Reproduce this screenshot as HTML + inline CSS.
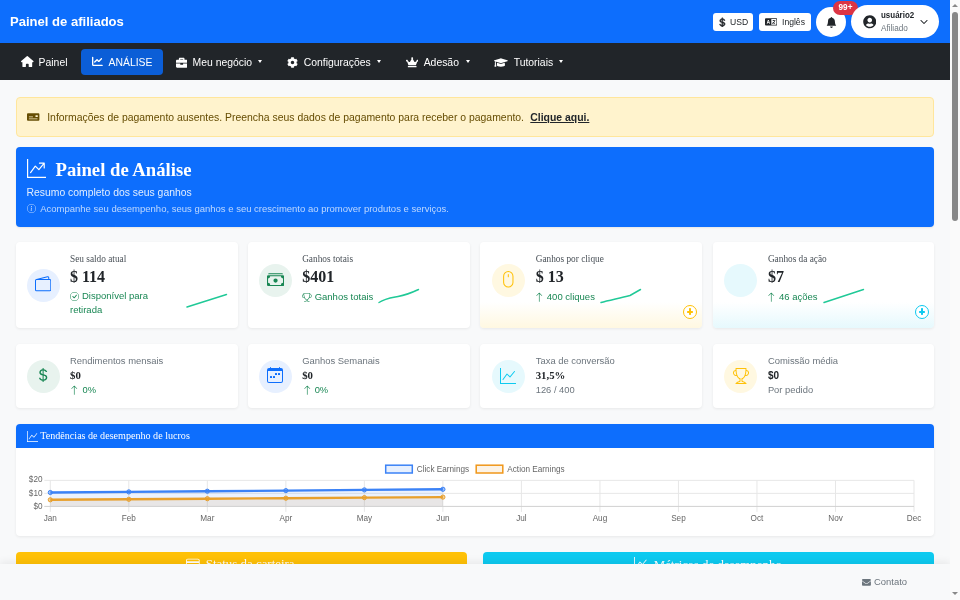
<!DOCTYPE html>
<html lang="pt"><head><meta charset="utf-8"><title>Painel de afiliados</title>
<style>
*{box-sizing:border-box;margin:0;padding:0}
html,body{width:960px;height:600px;overflow:hidden}
body{font-family:"Liberation Sans",sans-serif;background:#f8f9fa;color:#212529;position:relative;font-size:10.4px}
.abs{position:absolute}
.t{position:absolute;white-space:nowrap}
.serif{font-family:"Liberation Serif",serif}
#page{position:absolute;left:0;top:0;width:950px;height:600px;overflow:hidden;background:#f8f9fa;will-change:transform}
#top{position:absolute;left:0;top:0;width:950px;height:43px;background:#0d6efd}
#brand{left:10px;top:14.3px;font-size:13.05px;font-weight:bold;color:#fff;line-height:16px}
.pill{position:absolute;background:#fff;border-radius:3px;height:18px;top:13px}
.pill .t{font-size:8.6px;line-height:18px;top:0;color:#212529}
#bell{position:absolute;left:816px;top:7px;width:30px;height:30px;border-radius:50%;background:#fff}
#badge{position:absolute;left:833px;top:1px;width:25px;height:14px;border-radius:7px;background:#dc3545;color:#fff;font-size:8.2px;font-weight:bold;line-height:13px;text-align:center}
#user{position:absolute;left:851px;top:5px;width:88px;height:33px;border-radius:17px;background:#fff}
#nav{position:absolute;left:0;top:43px;width:950px;height:37px;background:#212529}
#nav .t{top:0.7px;height:37px;line-height:38px;color:#fff;font-size:10.4px}
#active{position:absolute;left:81px;top:6px;width:82px;height:26px;background:#0b5ed7;border-radius:4px}
.caret{position:absolute;top:17.2px;width:0;height:0;border-left:2.6px solid transparent;border-right:2.6px solid transparent;border-top:3.2px solid #fff}
#alert{position:absolute;left:16px;top:97px;width:918px;height:40px;background:#fff3cd;border:1px solid #ffe69c;border-radius:4px;color:#664d03}
#alert .t{font-size:10.43px;line-height:12px;top:13.5px}
#hero{position:absolute;left:16px;top:147px;width:918px;height:79.5px;background:#0d6efd;border-radius:4px;color:#fff;box-shadow:0 1px 2px rgba(0,0,0,.08)}
.card{position:absolute;background:#fff;border-radius:4px;box-shadow:0 1px 3px rgba(0,0,0,.07);overflow:hidden}
.c1{top:242px;width:221.5px;height:86px}
.c2{top:344px;width:221.5px;height:64px}
.ic{position:absolute;width:33px;height:33px;border-radius:50%}
.lbl1{font-family:"Liberation Serif",serif;font-size:9.3px;color:#495057;line-height:12px;left:54px;top:11px}
.val1{font-family:"Liberation Serif",serif;font-weight:bold;font-size:16px;color:#212529;line-height:19px;left:54px;top:25px}
.sub1{font-size:9.5px;color:#198754;line-height:14px;top:47px}
.lbl2{font-size:9.43px;color:#6c757d;line-height:12px;left:54px;top:11px}
.val2{font-family:"Liberation Serif",serif;font-weight:bold;font-size:10.8px;color:#212529;line-height:13px;left:54px;top:25px}
.sub2{font-size:9.35px;color:#198754;line-height:12px;top:40px}
#chart{position:absolute;left:16px;top:424px;width:918px;height:112px;background:#fff;border-radius:4px;box-shadow:0 1px 3px rgba(0,0,0,.07);overflow:hidden}
#charth{position:absolute;left:0;top:0;width:918px;height:24px;background:#0d6efd;color:#fff}
#by{position:absolute;left:16px;top:552px;width:451px;height:48px;background:#ffc107;border-radius:4px 4px 0 0;overflow:hidden}
#bc{position:absolute;left:483px;top:552px;width:451px;height:48px;background:#0dcaf0;border-radius:4px 4px 0 0;overflow:hidden}
#foot{position:absolute;left:0;top:564px;width:950px;height:36px;background:#f8f9fa;box-shadow:0 -2px 8px rgba(0,0,0,.07)}
#sb{position:absolute;left:950px;top:0;width:10px;height:600px;background:#fafafa}
#thumb{position:absolute;left:2px;top:12px;width:6px;height:209px;border-radius:3px;background:#888}
.arr{position:absolute;left:2px;width:0;height:0;border-left:3px solid transparent;border-right:3px solid transparent}
</style></head>
<body>
<div id="page">
<div id="top"><div class="t" id="brand">Painel de afiliados</div><div class="pill" style="left:713px;width:40px"><svg class="abs" style="left:3.8px;top:3.6px" width="10.4" height="10.8" viewBox="0 0 16 16" fill="#212529" stroke="#212529" stroke-width="0.9"><path d="M4 10.781c.148 1.667 1.513 2.850 3.591 3.003V15h1.043v-1.216c2.270-.179 3.678-1.438 3.678-3.300 0-1.590-.947-2.510-2.956-3.028l-.722-.187V3.467c1.122.110 1.879.714 2.070 1.616h1.470c-.166-1.600-1.540-2.748-3.540-2.875V1H7.591v1.233c-1.939.230-3.270 1.472-3.270 3.156 0 1.454.966 2.483 2.661 2.917l.61.162v4.031c-1.149-.170-1.940-.800-2.131-1.718H4zm3.391-3.836c-1.043-.263-1.600-.825-1.600-1.616 0-.944.704-1.641 1.800-1.828v3.495l-.200-.050zm1.591 1.872c1.287.323 1.852.859 1.852 1.769 0 1.097-.826 1.828-2.200 1.939V8.730l.348.086z"/></svg><div class="t" style="left:17px">USD</div></div><div class="pill" style="left:759px;width:52px"><svg class="abs" style="left:5.7px;top:3.75px" width="12.2" height="9.76" viewBox="0 0 640 512" fill="#212529" ><path fill-rule="evenodd" d="M48 64h544a48 48 0 0 1 48 48v288a48 48 0 0 1-48 48H48a48 48 0 0 1-48-48V112a48 48 0 0 1 48-48zm284 40v304h236a32 32 0 0 0 32-32V136a32 32 0 0 0-32-32H332zM152 160l-64 192h40l12-40h72l12 40h40l-64-192h-48zm24 48l24 72h-48l24-72z"/><path d="M400 176h40v-24h32v24h72v32h-20c-8 40-26 72-50 96 16 12 34 20 54 26l-12 30c-26-8-48-20-68-36-20 16-42 28-68 36l-12-30c22-6 40-14 56-26-12-14-22-30-28-48h34c4 10 10 18 18 26 16-18 28-42 34-74H400v-32z"/></svg><div class="t" style="left:23px">Inglês</div></div><div id="bell"><svg class="abs" style="left:9.8px;top:9.8px" width="10.9" height="10.9" viewBox="0 0 16 16" fill="#212529" ><path d="M8 16a2 2 0 0 0 2-2H6a2 2 0 0 0 2 2zm.995-14.901a1 1 0 1 0-1.990 0A5.002 5.002 0 0 0 3 6c0 1.098-.5 6-2 7h14c-1.500-1-2-5.902-2-7 0-2.420-1.720-4.440-4.005-4.901z"/></svg></div><div id="badge">99+</div><div id="user"><svg class="abs" style="left:11.5px;top:10px" width="13.5" height="13.5" viewBox="0 0 496 512" fill="#212529" ><path d="M248 8C111 8 0 119 0 256s111 248 248 248 248-111 248-248S385 8 248 8zm0 96c48.600 0 88 39.400 88 88s-39.400 88-88 88-88-39.400-88-88 39.400-88 88-88zm0 344c-58.700 0-111.300-26.600-146.500-68.200 18.800-35.400 55.600-59.800 98.500-59.800 2.400 0 4.800.4 7.100 1.100 13 4.200 26.600 6.900 40.900 6.900 14.300 0 28-2.700 40.900-6.900 2.300-.7 4.700-1.100 7.100-1.100 42.900 0 79.700 24.400 98.500 59.800C359.300 421.400 306.700 448 248 448z"/></svg><div class="t" style="left:30px;top:2.5px;font-size:9.5px;font-weight:bold;line-height:14px;color:#212529;transform:scaleX(.838);transform-origin:0 0">usuário2</div><div class="t" style="left:30px;top:16px;font-size:9.5px;line-height:14px;color:#6c757d;transform:scaleX(.86);transform-origin:0 0">Afiliado</div><svg class="abs" style="left:69px;top:13px" width="8" height="8" viewBox="0 0 16 16" fill="#212529" stroke="#212529" stroke-width="1"><path fill-rule="evenodd" d="M1.646 4.646a.5.5 0 0 1 .708 0L8 10.293l5.646-5.647a.5.5 0 0 1 .708.708l-6 6a.5.5 0 0 1-.708 0l-6-6a.5.5 0 0 1 0-.708z"/></svg></div></div>
<div id="nav"><div id="active"></div><svg class="abs" style="left:21px;top:13.1px" width="12.6" height="11.2" viewBox="0 0 576 512" fill="#fff" ><path d="M288 0 Q276 0 266 8 L10 232 Q0 242 0 256 Q0 288 32 288 H64 V472 Q64 512 104 512 H184 Q224 512 224 472 V384 Q224 352 256 352 H320 Q352 352 352 384 V472 Q352 512 392 512 H472 Q512 512 512 472 V288 H544 Q576 288 576 256 Q576 241 565 231 L310 8 Q300 0 288 0 Z"/></svg><div class="t" style="left:38.6px">Painel</div><svg class="abs" style="left:92px;top:13.4px" width="10.8" height="10.8" viewBox="0 0 512 512" fill="#fff" ><path d="M64 64c0-17.7-14.3-32-32-32S0 46.3 0 64V400c0 44.2 35.8 80 80 80H480c17.700 0 32-14.300 32-32s-14.300-32-32-32H80c-8.800 0-16-7.200-16-16V64zm406.600 86.600c12.500-12.500 12.500-32.800 0-45.300s-32.800-12.500-45.300 0L320 210.700l-57.400-57.400c-12.500-12.500-32.800-12.500-45.300 0l-112 112c-12.500 12.500-12.500 32.800 0 45.300s32.800 12.500 45.300 0L240 221.300l57.400 57.400c12.500 12.500 32.800 12.500 45.300 0l128-128z"/></svg><div class="t" style="left:108.6px">ANÁLISE</div><svg class="abs" style="left:176px;top:13.9px" width="11.4" height="11.4" viewBox="0 0 512 512" fill="#fff" ><path d="M320 336c0 8.84-7.16 16-16 16h-96c-8.84 0-16-7.16-16-16v-48H0v144c0 25.6 22.4 48 48 48h416c25.6 0 48-22.4 48-48V288H320v48zm144-208h-80V80c0-25.6-22.4-48-48-48H176c-25.6 0-48 22.4-48 48v48H48c-25.6 0-48 22.4-48 48v80h512v-80c0-25.6-22.4-48-48-48zm-144 0H192V96h128v32z"/></svg><div class="t" style="left:192.6px">Meu negócio</div><div class="caret" style="left:258px"></div><svg class="abs" style="left:287.3px;top:14px" width="11" height="11" viewBox="0 0 512 512" fill="#fff" ><path d="M487.4 315.7l-42.6-24.6c4.3-23.2 4.3-47 0-70.2l42.6-24.6c4.9-2.8 7.1-8.6 5.5-14-11.1-35.6-30-67.8-54.7-94.6-3.8-4.1-10-5.1-14.8-2.3L380.8 110c-17.9-15.4-38.5-27.3-60.8-35.1V25.800c0-5.600-3.900-10.500-9.400-11.700-36.700-8.200-74.300-7.800-109.200 0-5.500 1.200-9.400 6.100-9.400 11.700V75c-22.200 7.900-42.800 19.800-60.800 35.100L88.700 85.500c-4.900-2.800-11-1.900-14.800 2.300-24.700 26.700-43.600 58.900-54.700 94.600-1.700 5.400.6 11.200 5.500 14L67.300 221c-4.300 23.200-4.300 47 0 70.200l-42.600 24.600c-4.900 2.800-7.100 8.600-5.500 14 11.100 35.600 30 67.800 54.700 94.600 3.800 4.100 10 5.100 14.800 2.300l42.600-24.600c17.900 15.400 38.500 27.300 60.800 35.100v49.200c0 5.600 3.900 10.500 9.400 11.700 36.700 8.200 74.300 7.800 109.200 0 5.500-1.200 9.400-6.100 9.400-11.700v-49.200c22.200-7.900 42.800-19.800 60.800-35.100l42.600 24.600c4.900 2.800 11 1.900 14.800-2.300 24.700-26.700 43.600-58.900 54.700-94.600 1.500-5.500-.7-11.300-5.600-14.100zM256 336c-44.100 0-80-35.900-80-80s35.900-80 80-80 80 35.900 80 80-35.900 80-80 80z"/></svg><div class="t" style="left:303.7px">Configurações</div><div class="caret" style="left:377px"></div><svg class="abs" style="left:405.5px;top:14px" width="12.4" height="10.5" viewBox="0 0 640 512" fill="#fff" ><path d="M528 448H112c-8.8 0-16 7.2-16 16v32c0 8.8 7.2 16 16 16h416c8.8 0 16-7.2 16-16v-32c0-8.800-7.200-16-16-16zm64-320c-26.500 0-48 21.500-48 48 0 7.100 1.600 13.700 4.400 19.800L476 239.200c-15.400 9.200-35.300 4-44.200-11.600L350.300 85C361 76.200 368 63 368 48c0-26.500-21.500-48-48-48s-48 21.500-48 48c0 15 7 28.200 17.700 37l-81.500 142.600c-8.900 15.600-28.900 20.800-44.200 11.600l-72.300-43.400c2.700-6 4.400-12.700 4.400-19.800 0-26.500-21.500-48-48-48S0 149.500 0 176s21.500 48 48 48c2.600 0 5.200-.4 7.700-.8L128 416h384l72.300-192.800c2.500.4 5.100.8 7.700.8 26.500 0 48-21.500 48-48s-21.500-48-48-48z"/></svg><div class="t" style="left:423.7px">Adesão</div><div class="caret" style="left:466px"></div><svg class="abs" style="left:494px;top:14px" width="13.8" height="11" viewBox="0 0 640 512" fill="#fff" ><path d="M622.34 153.2L343.4 67.5c-15.2-4.670-31.600-4.670-46.790 0L17.660 153.2c-23.540 7.230-23.540 38.360 0 45.590l48.630 14.940c-10.670 13.190-17.230 29.280-17.880 46.900C38.780 266.150 32 276.110 32 288c0 10.780 5.680 19.850 13.860 25.650L20.330 428.530C18.110 438.520 25.710 448 35.940 448h56.110c10.240 0 17.840-9.480 15.620-19.470L82.140 313.650C90.320 307.850 96 298.780 96 288c0-11.570-6.470-21.250-15.660-26.870.76-15.020 8.440-28.300 20.690-36.720L296.600 284.500c9.060 2.780 26.440 6.250 46.790 0l278.950-85.700c23.550-7.240 23.550-38.360 0-45.600zM352.790 315.090c-28.530 8.760-52.840 3.920-65.590 0l-145.020-44.550L128 384c0 35.350 85.960 64 192 64s192-28.650 192-64l-14.180-113.470-145.030 44.560z"/></svg><div class="t" style="left:513.7px">Tutoriais</div><div class="caret" style="left:558.5px"></div></div>
<div id="alert"><svg class="abs" style="left:10.3px;top:14px" width="12.4" height="10" viewBox="0 0 640 512" fill="#664d03" ><path fill-rule="evenodd" d="M48 64h544a48 48 0 0 1 48 48v288a48 48 0 0 1-48 48H48a48 48 0 0 1-48-48V112a48 48 0 0 1 48-48zm390 120v56a14 14 0 0 0 14 14h92a14 14 0 0 0 14-14v-56a14 14 0 0 0-14-14h-92a14 14 0 0 0-14 14zM96 240v20a8 8 0 0 0 8 8h196a8 8 0 0 0 8-8v-20a8 8 0 0 0-8-8H104a8 8 0 0 0-8 8zm0 106v20a8 8 0 0 0 8 8h432a8 8 0 0 0 8-8v-20a8 8 0 0 0-8-8H104a8 8 0 0 0-8 8z"/></svg><div class="t" style="left:30.2px">Informações de pagamento ausentes. Preencha seus dados de pagamento para receber o pagamento.</div><div class="t" style="left:513.3px;font-weight:bold;color:#212529;text-decoration:underline">Clique aqui.</div></div>
<div id="hero"><svg class="abs" style="left:10.5px;top:12px" width="19" height="19" viewBox="0 0 16 16" fill="#fff" ><path fill-rule="evenodd" d="M0 0h1v15h15v1H0V0Zm10 3.500a.5.5 0 0 1 .5-.5h4a.5.5 0 0 1 .5.5v4a.5.5 0 0 1-1 0V4.900l-3.613 4.417a.5.5 0 0 1-.74.037L7.060 6.767l-3.656 5.027a.5.5 0 0 1-.808-.588l4-5.500a.5.5 0 0 1 .758-.06l2.609 2.610L13.445 4H10.500a.5.5 0 0 1-.5-.5Z"/></svg><div class="t serif" style="left:39.5px;top:10.5px;font-size:18.7px;font-weight:bold;line-height:24px">Painel de Análise</div><div class="t" style="left:10.5px;top:38.5px;font-size:10.4px;line-height:13px;color:rgba(255,255,255,.88)">Resumo completo dos seus ganhos</div><svg class="abs" style="left:10.5px;top:57px" width="9" height="9" viewBox="0 0 16 16" fill="rgba(255,255,255,.75)" ><path d="M8 15A7 7 0 1 1 8 1a7 7 0 0 1 0 14zm0 1A8 8 0 1 0 8 0a8 8 0 0 0 0 16z"/><path d="m8.930 6.588-2.290.287-.082.380.450.083c.294.070.352.176.288.469l-.738 3.468c-.194.897.105 1.319.808 1.319.545 0 1.178-.252 1.465-.598l.088-.416c-.200.176-.492.246-.686.246-.275 0-.375-.193-.304-.533L8.930 6.588zM9 4.500a1 1 0 1 1-2 0 1 1 0 0 1 2 0z"/></svg><div class="t" style="left:24.2px;top:55.5px;font-size:9.5px;line-height:12px;color:rgba(255,255,255,.72)">Acompanhe seu desempenho, seus ganhos e seu crescimento ao promover produtos e serviços.</div></div>
<div class="card c1" style="left:16px"><div class="ic" style="left:10.5px;top:26.5px;background:#e7f0ff"></div><svg class="abs" style="left:19.2px;top:34.1px" width="16.3" height="16.3" viewBox="0 0 16 16" fill="#0d6efd" ><path d="M12.136.326A1.500 1.500 0 0 1 14 1.780V3h.5A1.500 1.500 0 0 1 16 4.500v9a1.500 1.500 0 0 1-1.500 1.500h-13A1.500 1.500 0 0 1 0 13.500v-9a1.500 1.500 0 0 1 1.432-1.499L12.136.326zM5.562 3H13V1.780a.5.5 0 0 0-.621-.484L5.562 3zM1.500 4a.5.5 0 0 0-.5.5v9a.5.5 0 0 0 .5.5h13a.5.5 0 0 0 .5-.5v-9a.5.5 0 0 0-.5-.5h-13z"/></svg><div class="t lbl1">Seu saldo atual</div><div class="t val1">$ 114</div><svg class="abs" style="left:54px;top:50px" width="9" height="9" viewBox="0 0 16 16" fill="#198754" ><path d="M8 15A7 7 0 1 1 8 1a7 7 0 0 1 0 14zm0 1A8 8 0 1 0 8 0a8 8 0 0 0 0 16z"/><path d="M10.970 4.970a.235.235 0 0 0-.020.022L7.477 9.417 5.384 7.323a.75.75 0 0 0-1.060 1.060L6.970 11.030a.75.75 0 0 0 1.079-.020l3.992-4.990a.75.75 0 0 0-1.071-1.050z"/></svg><div class="t sub1" style="left:66px">Disponível para</div><div class="t sub1" style="left:54px;top:61px">retirada</div><svg class="abs" style="left:168px;top:50px" width="46" height="18" viewBox="0 0 46 18" fill="none" stroke="#20c997" stroke-width="1.45" stroke-linecap="round" stroke-linejoin="round"><path d="M3 15 L42.5 2.5"/></svg></div>
<div class="card c1" style="left:248.17px"><div class="ic" style="left:10.5px;top:21.5px;background:#e8f3ee"></div><svg class="abs" style="left:18.8px;top:28.9px" width="17.1" height="17.1" viewBox="0 0 16 16" fill="#198754" ><path d="M1 3a1 1 0 0 1 1-1h12a1 1 0 0 1 1 1H1zm7 8a2 2 0 1 0 0-4 2 2 0 0 0 0 4z"/><path d="M0 5a1 1 0 0 1 1-1h14a1 1 0 0 1 1 1v8a1 1 0 0 1-1 1H1a1 1 0 0 1-1-1V5zm3 0a2 2 0 0 1-2 2v4a2 2 0 0 1 2 2h10a2 2 0 0 1 2-2V7a2 2 0 0 1-2-2H3z"/></svg><div class="t lbl1">Ganhos totais</div><div class="t val1">$401</div><svg class="abs" style="left:54.2px;top:50.7px" width="9.7" height="9.7" viewBox="0 0 16 16" fill="#198754" ><path d="M2.500.5A.5.5 0 0 1 3 0h10a.5.5 0 0 1 .5.5c0 .538-.012 1.050-.034 1.536a3 3 0 1 1-1.133 5.890c-.790 1.865-1.878 2.777-2.833 3.011v2.173l1.425.356c.194.048.377.135.537.255L13.300 15.100a.5.5 0 0 1-.300.900H3a.5.5 0 0 1-.300-.900l1.838-1.379c.160-.120.343-.207.537-.255L6.500 13.110v-2.173c-.955-.234-2.043-1.146-2.833-3.012a3 3 0 1 1-1.132-5.890A33.076 33.076 0 0 1 2.500.5zm.099 2.540a2 2 0 0 0 .720 3.935c-.333-1.050-.588-2.346-.720-3.935zm10.083 3.935a2 2 0 0 0 .720-3.935c-.133 1.590-.388 2.885-.720 3.935zM3.504 1c.007.517.026 1.006.056 1.469.130 2.028.457 3.546.870 4.667C5.294 9.480 6.484 10 7 10a.5.5 0 0 1 .5.5v2.610a1 1 0 0 1-.757.970l-1.426.356a.5.5 0 0 0-.179.085L4.500 15h7l-.638-.479a.501.501 0 0 0-.180-.085l-1.425-.356a1 1 0 0 1-.757-.970V10.500A.5.5 0 0 1 9 10c.516 0 1.706-.520 2.570-2.864.413-1.120.740-2.640.870-4.667.030-.463.049-.952.056-1.469H3.504z"/></svg><div class="t sub1" style="left:66.5px;top:48px">Ganhos totais</div><svg class="abs" style="left:128px;top:45px" width="46" height="18" viewBox="0 0 46 18" fill="none" stroke="#20c997" stroke-width="1.45" stroke-linecap="round" stroke-linejoin="round"><path d="M3 15.5 C9 11.5 14 11 22 9.5 S 34 6.5 42.5 2.5"/></svg></div>
<div class="card c1" style="left:480.33px;background:linear-gradient(#fff 0,#fff 70%,#fff8e1 100%)"><div class="ic" style="left:11.5px;top:21.5px;background:#fff8e1"></div><svg class="abs" style="left:19.6px;top:29px" width="16.6" height="16.6" viewBox="0 0 16 16" fill="#ffc107" ><path d="M8 3a.5.5 0 0 1 .5.5v2a.5.5 0 0 1-1 0v-2A.5.5 0 0 1 8 3zm4 8a4 4 0 0 1-8 0V5a4 4 0 1 1 8 0v6zM8 0a5 5 0 0 0-5 5v6a5 5 0 0 0 10 0V5a5 5 0 0 0-5-5z"/></svg><div class="t lbl1" style="left:55.4px">Ganhos por clique</div><div class="t val1" style="left:55.4px">$ 13</div><svg class="abs" style="left:53.9px;top:50.05px" width="10.5" height="10.5" viewBox="0 0 16 16" fill="#198754" ><path fill-rule="evenodd" d="M8 15a.5.5 0 0 0 .5-.5V2.707l3.146 3.147a.5.5 0 0 0 .708-.708l-4-4a.5.5 0 0 0-.708 0l-4 4a.5.5 0 1 0 .708.708L7.500 2.707V14.500a.5.5 0 0 0 .5.5z"/></svg><div class="t sub1" style="left:66.5px;top:48px">400 cliques</div><svg class="abs" style="left:118px;top:45px" width="46" height="18" viewBox="0 0 46 18" fill="none" stroke="#20c997" stroke-width="1.45" stroke-linecap="round" stroke-linejoin="round"><path d="M3 15.5 C10 13.5 20 11.5 32 8.5 L42.5 2.5"/></svg><div class="abs" style="left:202.6px;top:62.9px;width:14.2px;height:14.2px;border-radius:50%;border:1.1px solid #ffc107;background:#fff"><div class="abs" style="left:2.6px;top:5.28px;width:6.8px;height:1.45px;border-radius:.7px;background:#ffc107"></div><div class="abs" style="left:5.28px;top:2.6px;width:1.45px;height:6.8px;border-radius:.7px;background:#ffc107"></div></div></div>
<div class="card c1" style="left:712.5px;background:linear-gradient(#fff 0,#fff 70%,#e6f9fd 100%)"><div class="ic" style="left:11.5px;top:21.5px;background:#e6f9fd"></div><div class="t lbl1" style="left:55.4px">Ganhos da ação</div><div class="t val1" style="left:55.4px">$7</div><svg class="abs" style="left:53.9px;top:50.05px" width="10.5" height="10.5" viewBox="0 0 16 16" fill="#198754" ><path fill-rule="evenodd" d="M8 15a.5.5 0 0 0 .5-.5V2.707l3.146 3.147a.5.5 0 0 0 .708-.708l-4-4a.5.5 0 0 0-.708 0l-4 4a.5.5 0 1 0 .708.708L7.500 2.707V14.500a.5.5 0 0 0 .5.5z"/></svg><div class="t sub1" style="left:66.5px;top:48px">46 ações</div><svg class="abs" style="left:108.5px;top:45px" width="46" height="18" viewBox="0 0 46 18" fill="none" stroke="#20c997" stroke-width="1.45" stroke-linecap="round" stroke-linejoin="round"><path d="M3 15.5 L42.5 2.5"/></svg><div class="abs" style="left:202.6px;top:62.9px;width:14.2px;height:14.2px;border-radius:50%;border:1.1px solid #0dcaf0;background:#fff"><div class="abs" style="left:2.6px;top:5.28px;width:6.8px;height:1.45px;border-radius:.7px;background:#0dcaf0"></div><div class="abs" style="left:5.28px;top:2.6px;width:1.45px;height:6.8px;border-radius:.7px;background:#0dcaf0"></div></div></div>
<div class="card c2" style="left:16px"><div class="ic" style="left:10.5px;top:15.5px;background:#e8f3ee"></div><svg class="abs" style="left:19.4px;top:23.1px" width="16" height="16" viewBox="0 0 16 16" fill="#198754" ><path d="M4 10.781c.148 1.667 1.513 2.850 3.591 3.003V15h1.043v-1.216c2.270-.179 3.678-1.438 3.678-3.300 0-1.590-.947-2.510-2.956-3.028l-.722-.187V3.467c1.122.110 1.879.714 2.070 1.616h1.470c-.166-1.600-1.540-2.748-3.540-2.875V1H7.591v1.233c-1.939.230-3.270 1.472-3.270 3.156 0 1.454.966 2.483 2.661 2.917l.61.162v4.031c-1.149-.170-1.940-.800-2.131-1.718H4zm3.391-3.836c-1.043-.263-1.600-.825-1.600-1.616 0-.944.704-1.641 1.800-1.828v3.495l-.200-.050zm1.591 1.872c1.287.323 1.852.859 1.852 1.769 0 1.097-.826 1.828-2.200 1.939V8.730l.348.086z"/></svg><div class="t lbl2">Rendimentos mensais</div><div class="t val2">$0</div><svg class="abs" style="left:53.45px;top:40.75px" width="10.5" height="10.5" viewBox="0 0 16 16" fill="#198754" ><path fill-rule="evenodd" d="M8 15a.5.5 0 0 0 .5-.5V2.707l3.146 3.147a.5.5 0 0 0 .708-.708l-4-4a.5.5 0 0 0-.708 0l-4 4a.5.5 0 1 0 .708.708L7.500 2.707V14.500a.5.5 0 0 0 .5.5z"/></svg><div class="t sub2" style="left:66.5px">0%</div></div>
<div class="card c2" style="left:248.17px"><div class="ic" style="left:10.5px;top:15.5px;background:#e7f0ff"></div><svg class="abs" style="left:18.6px;top:23px" width="16" height="16" viewBox="0 0 16 16" fill="#0d6efd" ><path d="M11 6.500a.5.5 0 0 1 .5-.5h1a.5.5 0 0 1 .5.5v1a.5.5 0 0 1-.5.5h-1a.5.5 0 0 1-.5-.5v-1zm-3 0a.5.5 0 0 1 .5-.5h1a.5.5 0 0 1 .5.5v1a.5.5 0 0 1-.5.5h-1a.5.5 0 0 1-.5-.5v-1zm-5 3a.5.5 0 0 1 .5-.5h1a.5.5 0 0 1 .5.5v1a.5.5 0 0 1-.5.5h-1a.5.5 0 0 1-.5-.5v-1zm3 0a.5.5 0 0 1 .5-.5h1a.5.5 0 0 1 .5.5v1a.5.5 0 0 1-.5.5h-1a.5.5 0 0 1-.5-.5v-1z"/><path d="M3.500 0a.5.5 0 0 1 .5.5V1h8V.5a.5.5 0 0 1 1 0V1h1a2 2 0 0 1 2 2v11a2 2 0 0 1-2 2H2a2 2 0 0 1-2-2V3a2 2 0 0 1 2-2h1V.5a.5.5 0 0 1 .5-.5zM1 4v10a1 1 0 0 0 1 1h12a1 1 0 0 0 1-1V4H1z"/></svg><div class="t lbl2">Ganhos Semanais</div><div class="t val2">$0</div><svg class="abs" style="left:53.45px;top:40.75px" width="10.5" height="10.5" viewBox="0 0 16 16" fill="#198754" ><path fill-rule="evenodd" d="M8 15a.5.5 0 0 0 .5-.5V2.707l3.146 3.147a.5.5 0 0 0 .708-.708l-4-4a.5.5 0 0 0-.708 0l-4 4a.5.5 0 1 0 .708.708L7.500 2.707V14.500a.5.5 0 0 0 .5.5z"/></svg><div class="t sub2" style="left:66.5px">0%</div></div>
<div class="card c2" style="left:480.33px"><div class="ic" style="left:11.5px;top:15.5px;background:#e6f9fd"></div><svg class="abs" style="left:20px;top:24px" width="16" height="16" viewBox="0 0 16 16" fill="#0dcaf0" ><path fill-rule="evenodd" d="M0 0h1v15h15v1H0V0Zm14.817 3.113a.5.5 0 0 1 .07.704l-4.500 5.500a.5.5 0 0 1-.74.037L7.060 6.767l-3.656 5.027a.5.5 0 0 1-.808-.588l4-5.500a.5.5 0 0 1 .758-.06l2.609 2.610 4.150-5.073a.5.5 0 0 1 .704-.07Z"/></svg><div class="t lbl2" style="left:55.4px">Taxa de conversão</div><div class="t val2" style="left:55.4px">31,5%</div><div class="t sub2" style="left:55.4px;color:#6c757d">126 / 400</div></div>
<div class="card c2" style="left:712.5px"><div class="ic" style="left:11.5px;top:15.5px;background:#fff8e1"></div><svg class="abs" style="left:20px;top:24px" width="16" height="16" viewBox="0 0 16 16" fill="#ffc107" ><path d="M2.500.5A.5.5 0 0 1 3 0h10a.5.5 0 0 1 .5.5c0 .538-.012 1.050-.034 1.536a3 3 0 1 1-1.133 5.890c-.790 1.865-1.878 2.777-2.833 3.011v2.173l1.425.356c.194.048.377.135.537.255L13.300 15.100a.5.5 0 0 1-.300.900H3a.5.5 0 0 1-.300-.900l1.838-1.379c.160-.120.343-.207.537-.255L6.500 13.110v-2.173c-.955-.234-2.043-1.146-2.833-3.012a3 3 0 1 1-1.132-5.890A33.076 33.076 0 0 1 2.500.5zm.099 2.540a2 2 0 0 0 .720 3.935c-.333-1.050-.588-2.346-.720-3.935zm10.083 3.935a2 2 0 0 0 .720-3.935c-.133 1.590-.388 2.885-.720 3.935zM3.504 1c.007.517.026 1.006.056 1.469.130 2.028.457 3.546.870 4.667C5.294 9.480 6.484 10 7 10a.5.5 0 0 1 .5.5v2.610a1 1 0 0 1-.757.970l-1.426.356a.5.5 0 0 0-.179.085L4.500 15h7l-.638-.479a.501.501 0 0 0-.180-.085l-1.425-.356a1 1 0 0 1-.757-.970V10.500A.5.5 0 0 1 9 10c.516 0 1.706-.520 2.570-2.864.413-1.120.740-2.640.870-4.667.030-.463.049-.952.056-1.469H3.504z"/></svg><div class="t lbl2" style="left:55.4px">Comissão média</div><div class="t val2" style="left:55.4px;font-family:'Liberation Sans',sans-serif;font-size:10px">$0</div><div class="t sub2" style="left:55.4px;color:#6c757d">Por pedido</div></div>
<div id="chart"><div id="charth"><svg class="abs" style="left:10.5px;top:6.5px" width="11" height="11" viewBox="0 0 16 16" fill="#fff" ><path fill-rule="evenodd" d="M0 0h1v15h15v1H0V0Zm14.817 3.113a.5.5 0 0 1 .07.704l-4.500 5.500a.5.5 0 0 1-.74.037L7.060 6.767l-3.656 5.027a.5.5 0 0 1-.808-.588l4-5.500a.5.5 0 0 1 .758-.06l2.609 2.610 4.150-5.073a.5.5 0 0 1 .704-.07Z"/></svg><div class="t serif" style="left:24.3px;top:0;font-size:10.1px;line-height:24px">Tendências de desempenho de lucros</div></div><svg class="abs" style="left:0;top:24px" width="918" height="88" viewBox="0 24 918 88" font-family="Liberation Sans, sans-serif"><line x1="28.299999999999997" x2="898.0199999999999" y1="56.35" y2="56.35" stroke="#e7e7e7" stroke-width="1"/><line x1="28.299999999999997" x2="898.0199999999999" y1="69.38" y2="69.38" stroke="#e7e7e7" stroke-width="1"/><line x1="34.30" x2="34.30" y1="56.35" y2="87.90" stroke="#e7e7e7" stroke-width="1"/><line x1="112.82" x2="112.82" y1="56.35" y2="87.90" stroke="#e7e7e7" stroke-width="1"/><line x1="191.34" x2="191.34" y1="56.35" y2="87.90" stroke="#e7e7e7" stroke-width="1"/><line x1="269.86" x2="269.86" y1="56.35" y2="87.90" stroke="#e7e7e7" stroke-width="1"/><line x1="348.38" x2="348.38" y1="56.35" y2="87.90" stroke="#e7e7e7" stroke-width="1"/><line x1="426.90" x2="426.90" y1="56.35" y2="87.90" stroke="#e7e7e7" stroke-width="1"/><line x1="505.42" x2="505.42" y1="56.35" y2="87.90" stroke="#e7e7e7" stroke-width="1"/><line x1="583.94" x2="583.94" y1="56.35" y2="87.90" stroke="#e7e7e7" stroke-width="1"/><line x1="662.46" x2="662.46" y1="56.35" y2="87.90" stroke="#e7e7e7" stroke-width="1"/><line x1="740.98" x2="740.98" y1="56.35" y2="87.90" stroke="#e7e7e7" stroke-width="1"/><line x1="819.50" x2="819.50" y1="56.35" y2="87.90" stroke="#e7e7e7" stroke-width="1"/><line x1="898.02" x2="898.02" y1="56.35" y2="87.90" stroke="#e7e7e7" stroke-width="1"/><polygon points="34.30,68.50 112.82,67.90 191.34,67.20 269.86,66.60 348.38,65.90 426.90,65.30 426.90,82.40 34.30,82.40" fill="rgba(59,130,246,.1)"/><polygon points="34.30,75.80 112.82,75.30 191.34,74.70 269.86,74.20 348.38,73.60 426.90,73.10 426.90,82.40 34.30,82.40" fill="rgba(232,160,45,.1)"/><polygon points="34.30,75.80 112.82,75.30 191.34,74.70 269.86,74.20 348.38,73.60 426.90,73.10 426.90,82.40 34.30,82.40" fill="rgba(128,128,128,.025)"/><line x1="28.299999999999997" x2="898.0199999999999" y1="82.40" y2="82.40" stroke="#d0d0d0" stroke-width="1"/><polyline points="34.30,68.50 112.82,67.90 191.34,67.20 269.86,66.60 348.38,65.90 426.90,65.30" fill="none" stroke="#3b82f6" stroke-width="2.4"/><polyline points="34.30,75.80 112.82,75.30 191.34,74.70 269.86,74.20 348.38,73.60 426.90,73.10" fill="none" stroke="#e8a02d" stroke-width="2.4"/><circle cx="34.30" cy="68.50" r="2.1" fill="rgba(59,130,246,.45)" stroke="#3b82f6" stroke-width="1"/><circle cx="112.82" cy="67.90" r="2.1" fill="rgba(59,130,246,.45)" stroke="#3b82f6" stroke-width="1"/><circle cx="191.34" cy="67.20" r="2.1" fill="rgba(59,130,246,.45)" stroke="#3b82f6" stroke-width="1"/><circle cx="269.86" cy="66.60" r="2.1" fill="rgba(59,130,246,.45)" stroke="#3b82f6" stroke-width="1"/><circle cx="348.38" cy="65.90" r="2.1" fill="rgba(59,130,246,.45)" stroke="#3b82f6" stroke-width="1"/><circle cx="426.90" cy="65.30" r="2.1" fill="rgba(59,130,246,.45)" stroke="#3b82f6" stroke-width="1"/><circle cx="34.30" cy="75.80" r="2.1" fill="rgba(232,160,45,.45)" stroke="#e8a02d" stroke-width="1"/><circle cx="112.82" cy="75.30" r="2.1" fill="rgba(232,160,45,.45)" stroke="#e8a02d" stroke-width="1"/><circle cx="191.34" cy="74.70" r="2.1" fill="rgba(232,160,45,.45)" stroke="#e8a02d" stroke-width="1"/><circle cx="269.86" cy="74.20" r="2.1" fill="rgba(232,160,45,.45)" stroke="#e8a02d" stroke-width="1"/><circle cx="348.38" cy="73.60" r="2.1" fill="rgba(232,160,45,.45)" stroke="#e8a02d" stroke-width="1"/><circle cx="426.90" cy="73.10" r="2.1" fill="rgba(232,160,45,.45)" stroke="#e8a02d" stroke-width="1"/><text x="26.5" y="58.25" font-size="8.2" fill="#666" text-anchor="end">$20</text><text x="26.5" y="71.57" font-size="8.2" fill="#666" text-anchor="end">$10</text><text x="26.5" y="84.90" font-size="8.2" fill="#666" text-anchor="end">$0</text><text x="34.30" y="96.50" font-size="8.2" fill="#666" text-anchor="middle">Jan</text><text x="112.82" y="96.50" font-size="8.2" fill="#666" text-anchor="middle">Feb</text><text x="191.34" y="96.50" font-size="8.2" fill="#666" text-anchor="middle">Mar</text><text x="269.86" y="96.50" font-size="8.2" fill="#666" text-anchor="middle">Apr</text><text x="348.38" y="96.50" font-size="8.2" fill="#666" text-anchor="middle">May</text><text x="426.90" y="96.50" font-size="8.2" fill="#666" text-anchor="middle">Jun</text><text x="505.42" y="96.50" font-size="8.2" fill="#666" text-anchor="middle">Jul</text><text x="583.94" y="96.50" font-size="8.2" fill="#666" text-anchor="middle">Aug</text><text x="662.46" y="96.50" font-size="8.2" fill="#666" text-anchor="middle">Sep</text><text x="740.98" y="96.50" font-size="8.2" fill="#666" text-anchor="middle">Oct</text><text x="819.50" y="96.50" font-size="8.2" fill="#666" text-anchor="middle">Nov</text><text x="898.02" y="96.50" font-size="8.2" fill="#666" text-anchor="middle">Dec</text><rect x="369.7" y="41.19999999999999" width="26.6" height="7.8" fill="rgba(59,130,246,.12)" stroke="#3b82f6" stroke-width="1.5"/><text x="400.8" y="47.60000000000002" font-size="8.2" fill="#666">Click Earnings</text><rect x="460.2" y="41.19999999999999" width="26.6" height="7.8" fill="rgba(230,154,46,.12)" stroke="#f0971a" stroke-width="1.5"/><text x="491.3" y="47.60000000000002" font-size="8.2" fill="#666">Action Earnings</text></svg></div>
<div id="by"><svg class="abs" style="left:170.3px;top:4.7px" width="13.7" height="13.7" viewBox="0 0 16 16" fill="#fff" ><path d="M0 4a2 2 0 0 1 2-2h12a2 2 0 0 1 2 2v8a2 2 0 0 1-2 2H2a2 2 0 0 1-2-2V4zm2-1a1 1 0 0 0-1 1v1h14V4a1 1 0 0 0-1-1H2zm13 4H1v5a1 1 0 0 0 1 1h12a1 1 0 0 0 1-1V7z"/><path d="M2 10a1 1 0 0 1 1-1h1a1 1 0 0 1 1 1v1a1 1 0 0 1-1 1H3a1 1 0 0 1-1-1v-1z"/></svg><div class="t serif" style="left:189.8px;top:4.2px;font-size:12.9px;line-height:16px;color:#fff">Status da carteira</div></div><div id="bc"><svg class="abs" style="left:151px;top:4.6px" width="13.5" height="13.5" viewBox="0 0 16 16" fill="#fff" ><path fill-rule="evenodd" d="M0 0h1v15h15v1H0V0Zm14.817 3.113a.5.5 0 0 1 .07.704l-4.500 5.500a.5.5 0 0 1-.74.037L7.060 6.767l-3.656 5.027a.5.5 0 0 1-.808-.588l4-5.500a.5.5 0 0 1 .758-.06l2.609 2.610 4.150-5.073a.5.5 0 0 1 .704-.07Z"/></svg><div class="t serif" style="left:170.7px;top:5px;font-size:12.9px;line-height:16px;color:#fff">Métricas de desempenho</div></div>
<div id="foot"><svg class="abs" style="left:862.1px;top:13.5px" width="8.9" height="8.9" viewBox="0 0 512 512" fill="#6c757d" ><path d="M502.3 190.8c3.9-3.1 9.7-.2 9.7 4.700V400c0 26.500-21.500 48-48 48H48c-26.500 0-48-21.500-48-48V195.600c0-5 5.700-7.800 9.700-4.700 22.400 17.400 52.100 39.500 154.100 113.600 21.100 15.400 56.700 47.800 92.200 47.600 35.700.3 72-32.800 92.300-47.600 102-74.100 131.600-96.300 154-113.700zM256 320c23.200.4 56.600-29.200 73.400-41.400 132.700-96.300 142.800-104.700 173.400-128.700 5.800-4.500 9.200-11.500 9.200-18.900v-19c0-26.500-21.500-48-48-48H48C21.500 64 0 85.500 0 112v19c0 7.400 3.400 14.300 9.200 18.900 30.600 23.900 40.700 32.400 173.400 128.700 16.800 12.200 50.200 41.800 73.400 41.400z"/></svg><div class="t" style="left:874px;top:12px;font-size:9.45px;line-height:12px;color:#6c757d">Contato</div></div>
</div>
<div id="sb"><div class="arr" style="top:4px;border-bottom:3.5px solid #888"></div><div id="thumb"></div><div class="arr" style="top:592px;border-top:3.5px solid #888"></div></div>
</body></html>
